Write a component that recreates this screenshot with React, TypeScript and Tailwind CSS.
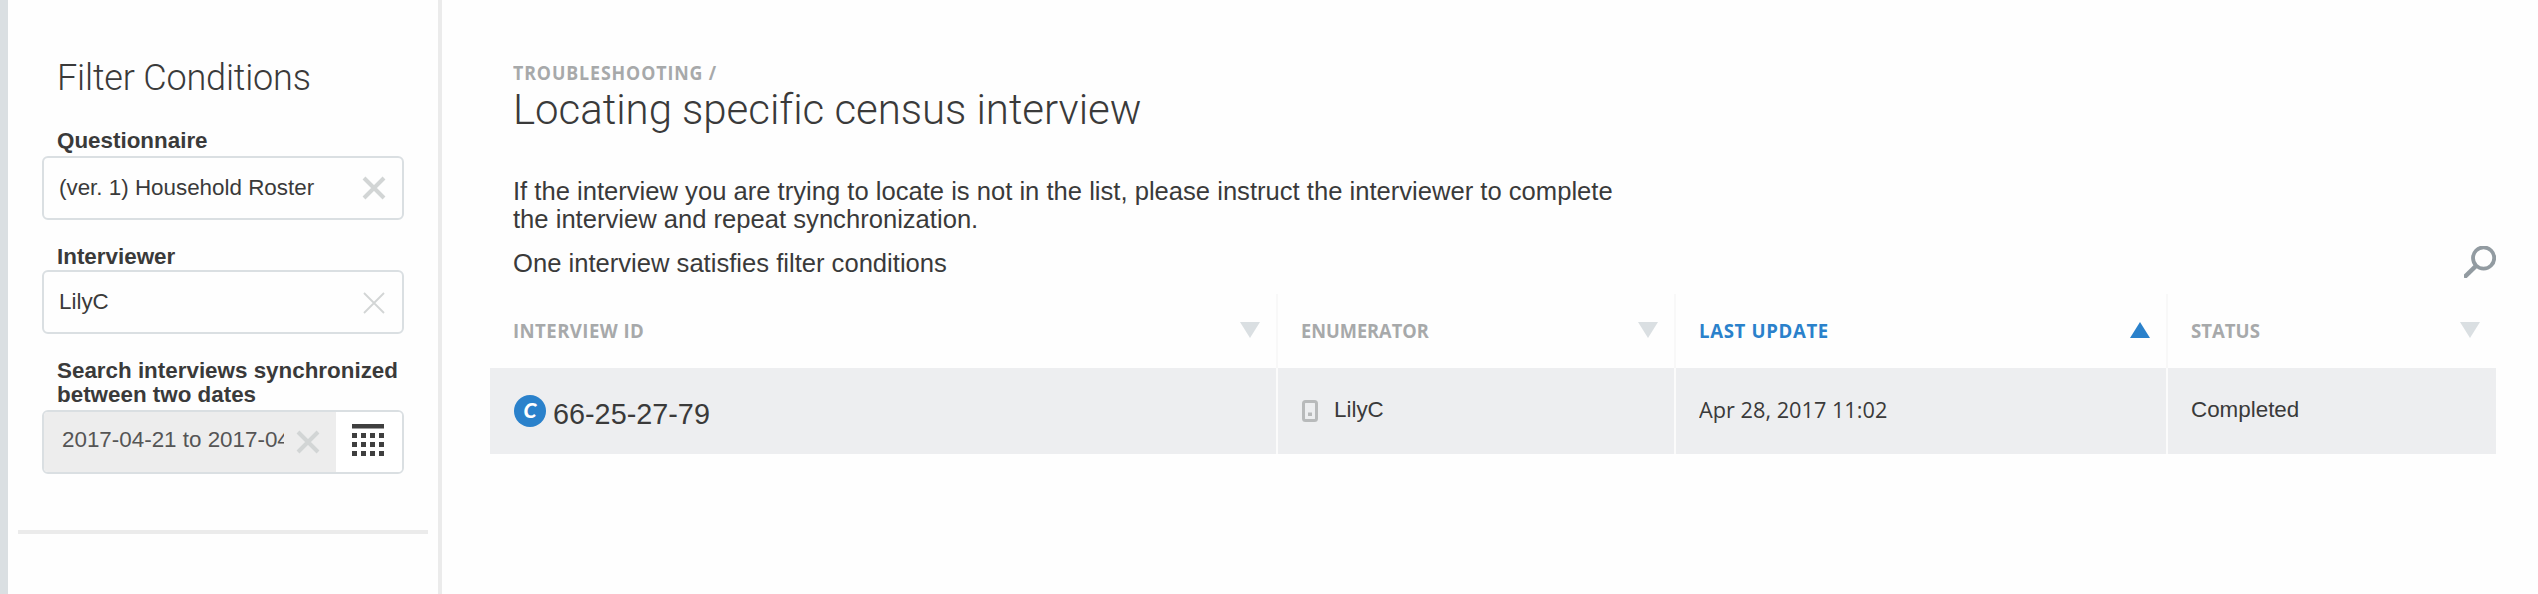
import type { ReactNode } from "react";

function Cross({ stroke }: { stroke: number }) {
  return (
    <svg width="24" height="24" viewBox="0 0 24 24" fill="none" stroke="#d2d5d5" strokeWidth={stroke}>
      <path d="M2 2 22 22M22 2 2 22" />
    </svg>
  );
}

function CalendarGrid() {
  const steps = [0, 9, 18, 27];
  return (
    <svg width="32" height="32" viewBox="0 0 32 32" fill="#3f3f3f">
      <rect width="32" height="4.5" />
      {[9, 18, 27].map((y) => steps.map((x) => <rect key={`${x}-${y}`} x={x} y={y} width="5" height="5" />))}
    </svg>
  );
}

function SearchIcon() {
  return (
    <svg width="32" height="32" viewBox="0 0 32 32" fill="none" stroke="#929ba1" strokeWidth="3.8">
      <circle cx="19.6" cy="12" r="10.6" />
      <path d="M12.3 19.6 0 31.6" strokeWidth="4.4" />
    </svg>
  );
}

function PhoneIcon() {
  return (
    <svg width="16" height="22" viewBox="0 0 16 22" fill="none">
      <rect x="1.5" y="1.5" width="13" height="19" rx="2" stroke="#b8babb" strokeWidth="3" />
      <rect x="6" y="12.5" width="4" height="3.5" fill="#b8babb" />
    </svg>
  );
}

function Sort({ up = false }: { up?: boolean }) {
  return (
    <svg width="20" height="16" viewBox="0 0 20 16" className="shrink-0">
      {up ? <path d="M0 16H20L10 0Z" fill="#2a81cb" /> : <path d="M0 0H20L10 16Z" fill="#dadfe2" />}
    </svg>
  );
}

function Label({ children }: { children: ReactNode }) {
  return <div className="pt-px pl-[15px] text-[22.4px] leading-6 font-bold whitespace-nowrap">{children}</div>;
}

function Head({ children, up = false, className }: { children: ReactNode; up?: boolean; className: string }) {
  return (
    <div className="flex h-[74px] items-center justify-between border-[#f8f8f8] pr-4 pb-[2px] pl-[22.5px] not-last:border-r-2">
      <span className={`origin-left pt-px font-['Open_Sans'] text-[20px] leading-6 font-bold ${className}`}>{children}</span>
      <Sort up={up} />
    </div>
  );
}

function Cell({ children }: { children: ReactNode }) {
  return (
    <div className="flex h-[86px] items-center border-[#fbfbfb] bg-[#edeef0] pl-[23px] text-[22.4px] leading-6 not-last:border-r-2">
      {children}
    </div>
  );
}

export default function App() {
  return (
    <div className="flex h-[594px] w-[2538px] overflow-hidden bg-[#fefefe] font-['Liberation_Sans',Arial,sans-serif] text-[#3a3a3a]">
      <div className="w-2 shrink-0 bg-[#dadfe2]" />
      <aside className="w-[434px] shrink-0 border-r-4 border-[#ebebeb] bg-[#fefefe] pt-[58px]">
        <div className="ml-[34px] w-[362px]">
          <h2 className="pl-[15px] font-[Roboto] text-[36px] leading-10 font-light tracking-[-0.18px]">Filter Conditions</h2>

          <div className="mt-[30px]">
            <Label>Questionnaire</Label>
            <div className="mt-[3px] flex h-16 items-center justify-between rounded-md border-2 border-[#dadfe2] pr-4 pl-[15px] text-[22.4px] leading-6">
              <span>(ver. 1) Household Roster</span>
              <Cross stroke={4} />
            </div>
          </div>

          <div className="mt-6">
            <Label>Interviewer</Label>
            <div className="mt-px flex h-16 items-center justify-between rounded-md border-2 border-[#dadfe2] pr-4 pl-[15px] text-[22.4px] leading-6">
              <span>LilyC</span>
              <span className="pt-[2px]">
                <Cross stroke={1.8} />
              </span>
            </div>
          </div>

          <div className="mt-6">
            <Label>
              Search interviews synchronized
              <br />
              between two dates
            </Label>
            <div className="mt-[3px] flex h-16 overflow-hidden rounded-md border-2 border-[#dadfe2]">
              <div className="flex w-[292px] items-center bg-[#ededed] pl-[18px]">
                <span className="mr-3 mb-1 w-[222px] overflow-hidden text-[22.4px] leading-6 whitespace-nowrap text-[#555]">
                  2017-04-21 to 2017-04-28
                </span>
                <Cross stroke={4} />
              </div>
              <div className="flex flex-1 items-center bg-white pb-1 pl-4">
                <CalendarGrid />
              </div>
            </div>
          </div>
        </div>
        <div className="mt-14 ml-[10px] h-1 w-[410px] bg-[#ebebeb]" />
      </aside>

      <main className="flex-1 pt-[61px] pr-[42px] pl-12">
        <div className="pl-[23px]">
          <div className="flex">
            <span className="origin-left scale-x-[0.89] font-['Open_Sans'] text-[20px] leading-6 font-bold tracking-[1px] text-[#a7a9aa]">
              TROUBLESHOOTING /
            </span>
          </div>
          <h1 className="mt-px font-[Roboto] text-[42px] leading-[48px] font-light tracking-[-0.04px]">
            Locating specific census interview
          </h1>
          <p className="mt-[43px] text-[25.6px] leading-7">
            If the interview you are trying to locate is not in the list, please instruct the interviewer to complete
            <br />
            the interview and repeat synchronization.
          </p>
          <div className="mt-[13px] flex h-8 items-center justify-between">
            <span className="pt-[2px] text-[25.6px] leading-7">One interview satisfies filter conditions</span>
            <SearchIcon />
          </div>
        </div>

        <div className="mt-4 grid grid-cols-[788px_398px_492px_328px] text-[#a7a9aa]">
          <Head className="scale-x-[0.93] tracking-[0.45px]">INTERVIEW ID</Head>
          <Head className="scale-x-[0.91]">ENUMERATOR</Head>
          <Head up className="scale-x-[0.93] tracking-[0.7px] text-[#2a81cb]">
            LAST UPDATE
          </Head>
          <Head className="scale-x-[0.93]">STATUS</Head>
        </div>
        <div className="grid grid-cols-[788px_398px_492px_328px]">
          <Cell>
            <span className="ml-px flex size-8 items-center justify-center rounded-full bg-[#2a81cb] pb-[2px] font-[Lato] text-[21px] font-black text-white italic">
              C
            </span>
            <span className="mt-[5px] ml-[7px] text-[28.8px] leading-8">66-25-27-79</span>
          </Cell>
          <Cell>
            <span className="ml-px">
              <PhoneIcon />
            </span>
            <span className="mb-[2px] ml-4">LilyC</span>
          </Cell>
          <Cell>
            <span className="mb-[3px] origin-left scale-x-[0.97] font-['Open_Sans'] font-medium">Apr 28, 2017 11:02</span>
          </Cell>
          <Cell>
            <span className="mb-[2px]">Completed</span>
          </Cell>
        </div>
      </main>
    </div>
  );
}
